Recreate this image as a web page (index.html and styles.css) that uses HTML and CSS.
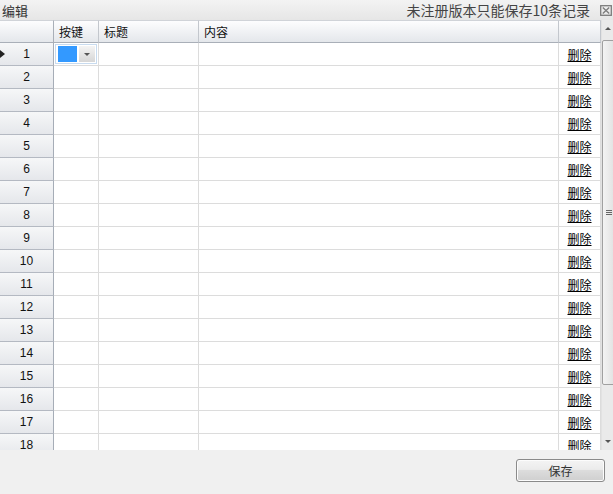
FILE: index.html
```html
<!DOCTYPE html>
<html lang="zh-CN">
<head>
<meta charset="utf-8">
<title>编辑</title>
<link rel="stylesheet" href="styles.css">
</head>
<body>
<div class="window">
  <div class="titlebar">
    <span class="title">编辑</span>
    <span class="notice">未注册版本只能保存10条记录</span>
    <svg class="close" width="12" height="11" viewBox="0 0 12 11"><rect x="0.7" y="0.7" width="10.6" height="9.6" fill="none" stroke="#7c7c7c" stroke-width="1.3"/><path d="M2.8 2.5 L9.2 8.5 M9.2 2.5 L2.8 8.5" stroke="#7c7c7c" stroke-width="1.3"/></svg>
  </div>
  <div class="main">
    <div class="grid">
      <div class="hcell corner"></div>
      <div class="hcell">按键</div>
      <div class="hcell">标题</div>
      <div class="hcell">内容</div>
      <div class="hcell last"></div>

      <div class="rh current"><span class="arrow"></span>1</div>
      <div class="cell keycell"><div class="editor"><span class="swatch"></span><span class="dd"><span class="tri"></span></span></div></div>
      <div class="cell"></div><div class="cell"></div><div class="cell del"><a>删除</a></div>

      <div class="rh">2</div><div class="cell"></div><div class="cell"></div><div class="cell"></div><div class="cell del"><a>删除</a></div>
      <div class="rh">3</div><div class="cell"></div><div class="cell"></div><div class="cell"></div><div class="cell del"><a>删除</a></div>
      <div class="rh">4</div><div class="cell"></div><div class="cell"></div><div class="cell"></div><div class="cell del"><a>删除</a></div>
      <div class="rh">5</div><div class="cell"></div><div class="cell"></div><div class="cell"></div><div class="cell del"><a>删除</a></div>
      <div class="rh">6</div><div class="cell"></div><div class="cell"></div><div class="cell"></div><div class="cell del"><a>删除</a></div>
      <div class="rh">7</div><div class="cell"></div><div class="cell"></div><div class="cell"></div><div class="cell del"><a>删除</a></div>
      <div class="rh">8</div><div class="cell"></div><div class="cell"></div><div class="cell"></div><div class="cell del"><a>删除</a></div>
      <div class="rh">9</div><div class="cell"></div><div class="cell"></div><div class="cell"></div><div class="cell del"><a>删除</a></div>
      <div class="rh">10</div><div class="cell"></div><div class="cell"></div><div class="cell"></div><div class="cell del"><a>删除</a></div>
      <div class="rh">11</div><div class="cell"></div><div class="cell"></div><div class="cell"></div><div class="cell del"><a>删除</a></div>
      <div class="rh">12</div><div class="cell"></div><div class="cell"></div><div class="cell"></div><div class="cell del"><a>删除</a></div>
      <div class="rh">13</div><div class="cell"></div><div class="cell"></div><div class="cell"></div><div class="cell del"><a>删除</a></div>
      <div class="rh">14</div><div class="cell"></div><div class="cell"></div><div class="cell"></div><div class="cell del"><a>删除</a></div>
      <div class="rh">15</div><div class="cell"></div><div class="cell"></div><div class="cell"></div><div class="cell del"><a>删除</a></div>
      <div class="rh">16</div><div class="cell"></div><div class="cell"></div><div class="cell"></div><div class="cell del"><a>删除</a></div>
      <div class="rh">17</div><div class="cell"></div><div class="cell"></div><div class="cell"></div><div class="cell del"><a>删除</a></div>
      <div class="rh">18</div><div class="cell"></div><div class="cell"></div><div class="cell"></div><div class="cell del"><a>删除</a></div>
    </div>
    <div class="vscroll">
      <div class="sbtn"><span class="up"></span></div>
      <div class="track">
        <div class="thumb"><span class="grip"></span></div>
      </div>
      <div class="sbtn"><span class="down"></span></div>
    </div>
  </div>
  <div class="footer">
    <button class="save">保存</button>
  </div>
</div>
</body>
</html>
```
FILE: styles.css
```css
html, body {
  margin: 0;
  padding: 0;
  overflow: hidden;
  background: #f0f0f0;
}
.window {
  width: 613px;
  height: 494px;
  display: flex;
  flex-direction: column;
  font-family: "Noto Sans CJK SC", "Liberation Sans", sans-serif;
  color: #222;
  overflow: hidden;
}
.titlebar {
  height: 20px;
  flex: none;
  display: flex;
  align-items: center;
  background: linear-gradient(#f3f3f3, #e6e6e6);
  padding-left: 2px;
  box-sizing: border-box;
}
.title {
  font-size: 13px;
  color: #333;
  flex: 1;
}
.notice {
  font-size: 14px;
  color: #444;
  margin-right: 10px;
}
.close {
  margin-right: 1px;
}
.main {
  height: 430px;
  flex: none;
  display: flex;
  overflow: hidden;
}
.grid {
  width: 601px;
  flex: none;
  display: grid;
  grid-template-columns: 54px 45px 100px 360px 42px;
  grid-auto-rows: 23px;
  background: #fff;
  overflow: hidden;
  align-content: start;
}
.hcell {
  box-sizing: border-box;
  border-right: 1px solid #c3c7cd;
  border-bottom: 1px solid #a9afb8;
  border-top: 1px solid #d0d3d8;
  background: linear-gradient(#fdfdfe, #e4e7eb);
  font-size: 12px;
  line-height: 21px;
  padding-left: 5px;
  color: #111;
}
.hcell.corner {
  border-right-color: #a9afb8;
}
.rh {
  position: relative;
  box-sizing: border-box;
  border-right: 1px solid #a6adb7;
  border-bottom: 1px solid #b4b9c2;
  background: linear-gradient(#f6f7f8, #e5e7eb);
  font-family: "Liberation Sans", sans-serif;
  font-size: 12px;
  line-height: 22px;
  text-align: center;
  color: #111;
}
.arrow {
  position: absolute;
  left: 0;
  top: 7px;
  width: 0;
  height: 0;
  border-top: 4px solid transparent;
  border-bottom: 4px solid transparent;
  border-left: 5px solid #222;
}
.cell {
  box-sizing: border-box;
  border-right: 1px solid #dcdcdc;
  border-bottom: 1px solid #dcdcdc;
  background: #fff;
}
.del {
  text-align: center;
  font-size: 12px;
  line-height: 23px;
}
.del a {
  color: #000;
  text-decoration: underline;
}
.keycell {
  padding: 1px 1px 1px 1px;
}
.editor {
  box-sizing: border-box;
  height: 20px;
  border: 1px solid #c8dbef;
  display: flex;
  align-items: stretch;
  padding: 1px;
  gap: 2px;
}
.swatch {
  width: 19px;
  margin-left: 1px;
  background: #3399ff;
}
.dd {
  width: 16px;
  background: linear-gradient(#f4f4f4, #d6d6d6);
  display: flex;
  align-items: center;
  justify-content: center;
}
.tri {
  width: 0;
  height: 0;
  border-left: 3px solid transparent;
  border-right: 3px solid transparent;
  border-top: 3px solid #555;
}
.vscroll {
  width: 17px;
  flex: none;
  display: flex;
  flex-direction: column;
  background: #eaeaea;
  border-left: 1px solid #e2e2e2;
}
.sbtn {
  height: 17px;
  flex: none;
  display: flex;
  align-items: center;
  justify-content: center;
  padding-right: 6px;
}
.up, .down {
  width: 0;
  height: 0;
  border-left: 3px solid transparent;
  border-right: 3px solid transparent;
}
.up { border-bottom: 3px solid #555; }
.down { border-top: 3px solid #555; }
.track {
  flex: 1;
  padding-top: 3px;
}
.thumb {
  height: 345px;
  box-sizing: border-box;
  border: 1px solid #a0a0a0;
  border-radius: 2px;
  background: linear-gradient(90deg, #f3f3f3, #dcdcdc);
  display: flex;
  align-items: center;
  padding-left: 3px;
}
.grip {
  width: 6px;
  height: 5px;
  background: repeating-linear-gradient(#666 0 1px, transparent 1px 2px);
}
.footer {
  flex: 1;
  display: flex;
  justify-content: flex-end;
  align-items: flex-start;
  padding: 9px 8px 0 0;
}
.save {
  width: 89px;
  height: 23px;
  border: 1px solid #8a8a8a;
  border-radius: 3px;
  background: linear-gradient(#f4f4f4 0%, #ebebeb 45%, #dcdcdc 50%, #cfcfcf 100%);
  font-family: "Noto Sans CJK SC", sans-serif;
  font-size: 12px;
  color: #333;
  padding: 0;
  box-shadow: inset 0 0 0 1px #fcfcfc;
}
```
